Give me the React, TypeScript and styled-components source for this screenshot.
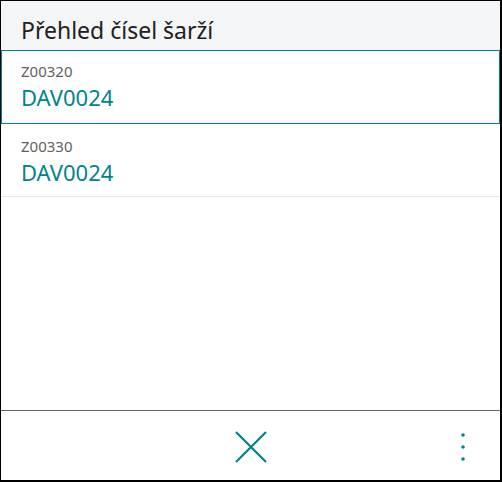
import React from "react";
import styled, { createGlobalStyle } from "styled-components";

const Global = createGlobalStyle`
  html, body { margin: 0; padding: 0; background: #fff; }
  * { box-sizing: border-box; }
`;

const Frame = styled.div`
  width: 502px;
  height: 482px;
  border: 1px solid #000;
  border-right-width: 2px;
  border-bottom-width: 2px;
  display: flex;
  flex-direction: column;
  font-family: "Noto Sans", "Open Sans", sans-serif;
  background: #fff;
`;

const Header = styled.div`
  height: 49px;
  background: #f4f5f7;
  display: flex;
  align-items: flex-start;
  padding: 15px 0 0 20px;
`;

const Title = styled.h1`
  margin: 0;
  font-size: 23px;
  font-weight: 400;
  color: #212121;
  line-height: 28px;
`;

const List = styled.div`
  flex: 1;
  display: flex;
  flex-direction: column;
`;

const Row = styled.div<{ $selected?: boolean }>`
  height: ${(p) => (p.$selected ? 74 : 73)}px;
  padding: ${(p) => (p.$selected ? "10px 19px" : "12px 20px")};
  border: ${(p) => (p.$selected ? "1px solid #00838a" : "none")};
  border-bottom: 1px solid ${(p) => (p.$selected ? "#00838a" : "#e6e6e6")};
  display: flex;
  flex-direction: column;
`;

const Code = styled.div`
  font-size: 15px;
  line-height: 20px;
  color: #5f5f5f;
`;

const Value = styled.div`
  font-size: 22px;
  line-height: 28px;
  color: #00838a;
  margin-top: 2px;
`;

const Footer = styled.div`
  height: 70px;
  border-top: 1px solid #666;
  padding-top: 3px;
  display: grid;
  grid-template-columns: 1fr auto 1fr;
  align-items: center;
`;

const IconButton = styled.button`
  border: none;
  background: none;
  padding: 0;
  display: flex;
  align-items: center;
  justify-content: center;
  color: #00838a;
`;

const MoreWrap = styled.div`
  display: flex;
  justify-content: flex-end;
  padding-right: 34px;
`;

export default function App() {
  return (
    <>
      <Global />
      <Frame>
        <Header>
          <Title>Přehled čísel šarží</Title>
        </Header>
        <List>
          <Row $selected>
            <Code>Z00320</Code>
            <Value>DAV0024</Value>
          </Row>
          <Row>
            <Code>Z00330</Code>
            <Value>DAV0024</Value>
          </Row>
        </List>
        <Footer>
          <div />
          <IconButton aria-label="Zavřít">
            <svg width="32" height="32" viewBox="0 0 32 32">
              <path d="M1 1 L31 31 M31 1 L1 31" stroke="#00838a" strokeWidth="2.2" fill="none" />
            </svg>
          </IconButton>
          <MoreWrap>
            <IconButton aria-label="Více">
              <svg width="6" height="30" viewBox="0 0 6 30">
                <circle cx="3" cy="3" r="1.8" fill="#00838a" />
                <circle cx="3" cy="15" r="1.8" fill="#00838a" />
                <circle cx="3" cy="27" r="1.8" fill="#00838a" />
              </svg>
            </IconButton>
          </MoreWrap>
        </Footer>
      </Frame>
    </>
  );
}
